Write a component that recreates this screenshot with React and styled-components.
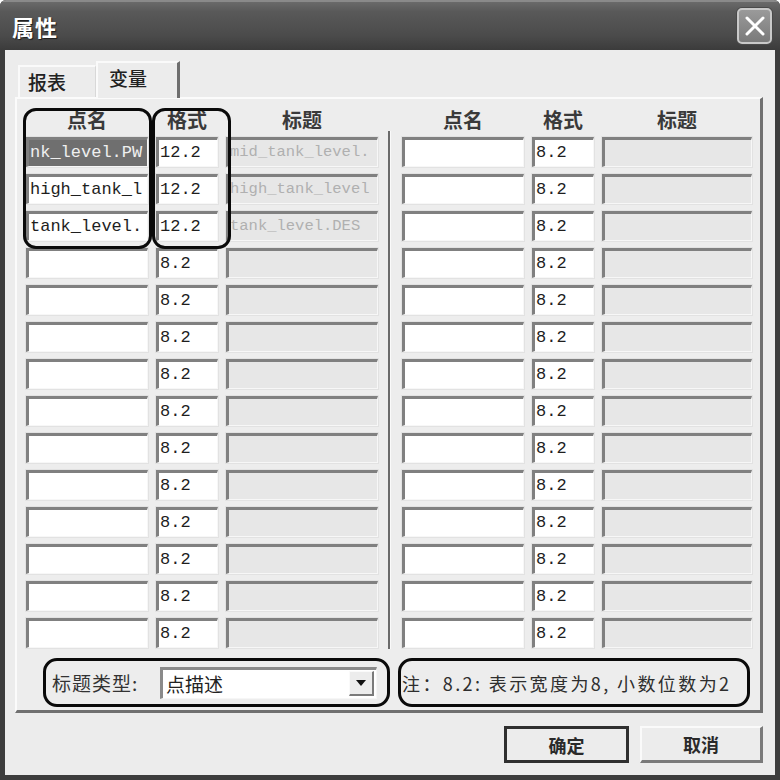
import React from "react";
import styled, { createGlobalStyle } from "styled-components";

const Global = createGlobalStyle`
    html, body {
        margin: 0;
        padding: 0;
        background: #ffffff;
    }
    * {
        box-sizing: border-box;
    }
`;

const CJK = `"Noto Sans CJK SC", "Liberation Sans", sans-serif`;
const MONO = `"Liberation Mono", "DejaVu Sans Mono", monospace`;

const Window = styled.div`
    width: 780px;
    height: 780px;
    display: flex;
    flex-direction: column;
    background: #3d3d3d;
    border-radius: 6px 6px 0 0;
    overflow: hidden;
    font-family: ${CJK};
`;

const TitleBar = styled.div`
    height: 50px;
    flex: none;
    display: flex;
    align-items: center;
    justify-content: space-between;
    padding: 0 8px 0 12px;
    background: linear-gradient(#6a6a6a 0%, #595959 20%, #4b4b4b 70%, #3b3b3b 100%);
    border-top: 2px solid #8a8a8a;
`;

const Title = styled.div`
    color: #ffffff;
    font-size: 22px;
    font-weight: 700;
    letter-spacing: 1px;
    text-shadow: 1px 1px 1px #1c1c1c;
`;

const CloseButton = styled.div`
    width: 35px;
    height: 36px;
    border: 2px solid #c9c9c9;
    border-radius: 5px;
    background: linear-gradient(#9a9a9a, #7a7a7a);
    display: flex;
    align-items: center;
    justify-content: center;
    box-shadow: 0 0 0 1px #4a4a4a;
`;

const Client = styled.div`
    flex: 1;
    margin: 0 5px 5px 5px;
    background: #ececec;
    padding: 10px 12px 12px 10px;
    display: flex;
    flex-direction: column;
`;

const TabStrip = styled.div`
    height: 37px;
    display: flex;
    align-items: flex-end;
    padding-left: 3px;
`;

const Tab = styled.div`
    height: ${(p) => (p.$active ? 37 : 32)}px;
    width: ${(p) => p.$w}px;
    padding: ${(p) => (p.$active ? "0 0 0 11px" : "0 0 0 8px")};
    line-height: 30px;
    font-size: 19px;
    font-weight: 500;
    color: #222;
    background: #ececec;
    border-top: 2px solid #fafafa;
    border-left: 2px solid #fafafa;
    border-right: ${(p) => (p.$active ? "3px solid #6e6e6e" : "1px solid #d8d8d8")};
    margin-bottom: ${(p) => (p.$active ? "-1px" : "0")};
    position: relative;
    z-index: ${(p) => (p.$active ? 2 : 1)};
`;

const Panel = styled.div`
    position: relative;
    height: 616px;
    background: #ededed;
    border-top: 2px solid #fbfbfb;
    border-left: 2px solid #fbfbfb;
    border-right: 3px solid #707070;
    border-bottom: 3px solid #707070;
    padding: 10px 8px 0 9px;
    display: flex;
    flex-direction: column;
`;

const Columns = styled.div`
    display: flex;
    align-items: flex-start;
`;

const Group = styled.div`
    display: grid;
    grid-template-columns: 122px 62px ${(p) => p.$titleW}px;
    column-gap: 8px;
    row-gap: 7px;
`;

const Head = styled.div`
    height: 26px;
    margin-bottom: -5px;
    text-align: center;
    font-size: 20px;
    font-weight: 700;
    color: #3a3a3a;
    line-height: 22px;
`;

const Separator = styled.div`
    width: 4px;
    margin: 22px 11px 0 10px;
    height: 518px;
    background: #6a6a6a;
    border-right: 1px solid #fafafa;
`;

const Field = styled.div`
    height: 30px;
    background: ${(p) => (p.$tone === "disabled" ? "#e7e7e7" : p.$tone === "selected" ? "#6f6f6f" : "#ffffff")};
    color: ${(p) => (p.$tone === "disabled" ? "#b0b0b0" : p.$tone === "selected" ? "#efefef" : "#1e1e1e")};
    border-top: 3px solid #808080;
    border-left: 3px solid #808080;
    border-right: 1px solid #f7f7f7;
    border-bottom: 1px solid #f7f7f7;
    box-shadow: 0 0 0 1px #e2e2e2;
    font-family: ${MONO};
    font-size: ${(p) => (p.$tone === "disabled" ? 15.5 : 17)}px;
    line-height: 25px;
    padding-left: 1px;
    white-space: nowrap;
    overflow: hidden;
`;

const Footer = styled.div`
    display: flex;
    margin-top: 9px;
    padding-left: 17px;
    gap: 8px;
`;

const Outline = styled.div`
    width: ${(p) => p.$w}px;
    height: 49px;
    border: 3px solid #0a0a0a;
    border-radius: 14px;
    display: flex;
    align-items: center;
    padding-left: ${(p) => p.$pl}px;
    gap: 8px;
`;

const Label = styled.div`
    font-size: 19px;
    letter-spacing: 1px;
    color: #333;
    width: 100px;
`;

const Combo = styled.div`
    width: 217px;
    height: 32px;
    background: #fff;
    border-top: 3px solid #8a8a8a;
    border-left: 3px solid #8a8a8a;
    border-right: 1px solid #f6f6f6;
    border-bottom: 1px solid #f6f6f6;
    display: flex;
    align-items: center;
    justify-content: space-between;
    padding: 0 2px 0 3px;
    font-size: 19px;
    color: #222;
`;

const DropButton = styled.div`
    width: 25px;
    height: 25px;
    background: #ececec;
    border-top: 1px solid #fafafa;
    border-left: 1px solid #fafafa;
    border-right: 2px solid #7a7a7a;
    border-bottom: 2px solid #7a7a7a;
    display: flex;
    align-items: center;
    justify-content: center;
`;

const Arrow = styled.div`
    width: 0;
    height: 0;
    border-left: 5px solid transparent;
    border-right: 5px solid transparent;
    border-top: 6px solid #111;
`;

const Note = styled.div`
    font-size: 18px;
    color: #2e2e2e;
    white-space: nowrap;
    letter-spacing: 2.4px;
`;

const Marker = styled.div`
    position: absolute;
    top: 9px;
    left: ${(p) => p.$x}px;
    width: ${(p) => p.$w}px;
    height: 141px;
    border: 3px solid #0a0a0a;
    border-radius: 13px;
    pointer-events: none;
`;

const ButtonRow = styled.div`
    display: flex;
    justify-content: flex-end;
    gap: 11px;
    margin-top: 13px;
`;

const Button = styled.div`
    width: ${(p) => p.$w}px;
    height: 37px;
    background: #ececec;
    display: flex;
    align-items: center;
    justify-content: center;
    font-size: 18px;
    font-weight: 700;
    color: #2a2a2a;
    border-top: ${(p) => (p.$default ? "3px solid #2f2f2f" : "2px solid #fafafa")};
    border-left: ${(p) => (p.$default ? "3px solid #2f2f2f" : "2px solid #fafafa")};
    border-right: 3px solid ${(p) => (p.$default ? "#2f2f2f" : "#7a7a7a")};
    border-bottom: 3px solid ${(p) => (p.$default ? "#2f2f2f" : "#7a7a7a")};
`;

const leftRows = [
    { name: "nk_level.PW", sel: true, fmt: "12.2", title: "mid_tank_level." },
    { name: "high_tank_l", fmt: "12.2", title: "high_tank_level" },
    { name: "tank_level.", fmt: "12.2", title: "tank_level.DES" },
    ...Array.from({ length: 11 }, () => ({ name: "", fmt: "8.2", title: "" })),
];

const rightRows = Array.from({ length: 14 }, () => ({ name: "", fmt: "8.2", title: "" }));

function VarGroup({ rows, titleW }) {
    return (
        <Group $titleW={titleW}>
            <Head>点名</Head>
            <Head>格式</Head>
            <Head>标题</Head>
            {rows.map((r, i) => (
                <React.Fragment key={i}>
                    <Field $tone={r.sel ? "selected" : "white"}>{r.name}</Field>
                    <Field>{r.fmt}</Field>
                    <Field $tone="disabled">{r.title}</Field>
                </React.Fragment>
            ))}
        </Group>
    );
}

export default function App() {
    return (
        <>
            <Global />
            <Window>
                <TitleBar>
                    <Title>属性</Title>
                    <CloseButton>
                        <svg width="22" height="22" viewBox="0 0 22 22">
                            <path d="M3 3 L19 19 M19 3 L3 19" stroke="#fff" strokeWidth="3" strokeLinecap="round" />
                        </svg>
                    </CloseButton>
                </TitleBar>
                <Client>
                    <TabStrip>
                        <Tab $w={78}>报表</Tab>
                        <Tab $w={84} $active>
                            变量
                        </Tab>
                    </TabStrip>
                    <Panel>
                        <Columns>
                            <VarGroup rows={leftRows} titleW={152} />
                            <Separator />
                            <VarGroup rows={rightRows} titleW={150} />
                        </Columns>
                        <Footer>
                            <Outline $w={347} $pl={6}>
                                <Label>标题类型:</Label>
                                <Combo>
                                    <span>点描述</span>
                                    <DropButton>
                                        <Arrow />
                                    </DropButton>
                                </Combo>
                            </Outline>
                            <Outline $w={352} $pl={1}>
                                <Note>注：8.2: 表示宽度为8, 小数位数为2</Note>
                            </Outline>
                        </Footer>
                        <Marker $x={6} $w={129} />
                        <Marker $x={135} $w={79} />
                    </Panel>
                    <ButtonRow>
                        <Button $w={125} $default>
                            确定
                        </Button>
                        <Button $w={123}>取消</Button>
                    </ButtonRow>
                </Client>
            </Window>
        </>
    );
}
